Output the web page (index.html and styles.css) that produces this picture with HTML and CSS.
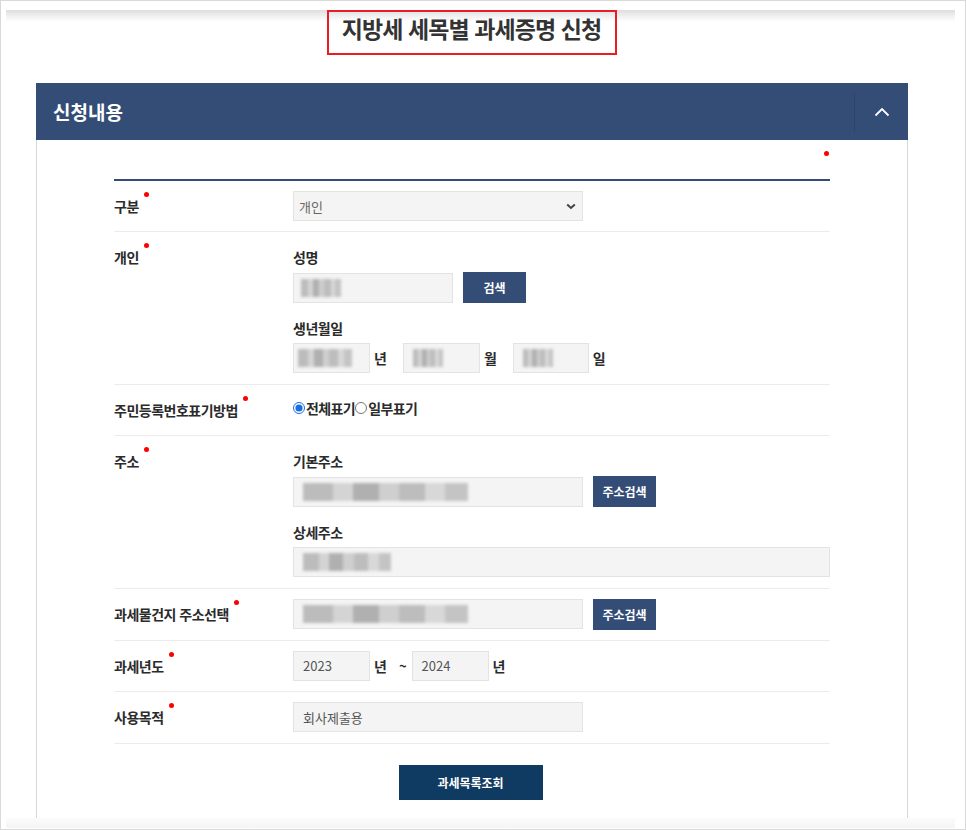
FILE: index.html
```html
<!DOCTYPE html>
<html lang="ko">
<head>
<meta charset="utf-8">
<title>지방세 세목별 과세증명 신청</title>
<link rel="stylesheet" href="styles.css">
</head>
<body>
<div class="page">
  <div class="top">
    <h1 class="title">지방세 세목별 과세증명 신청</h1>
  </div>

  <section class="panel">
    <header class="panel-head">
      <h2 class="panel-title">신청내용</h2>
      <button class="toggle" type="button" aria-label="접기">
        <svg width="16" height="10" viewBox="0 0 16 10"><path d="M1.5 8.5 L8 2 L14.5 8.5" fill="none" stroke="#fff" stroke-width="1.8"/></svg>
      </button>
    </header>

    <div class="panel-body">
      <div class="req-note"><span class="dot"></span></div>

      <div class="form">
        <div class="row">
          <div class="label req">구분</div>
          <div class="field">
            <div class="select w290">
              <span>개인</span>
              <svg width="10" height="7" viewBox="0 0 10 7"><path d="M1.2 1.5 L5 5 L8.8 1.5" fill="none" stroke="#444" stroke-width="2"/></svg>
            </div>
          </div>
        </div>

        <div class="row">
          <div class="label req">개인</div>
          <div class="field">
            <div class="sublabel">성명</div>
            <div class="line">
              <div class="input w160"><span class="blur b-name"></span></div>
              <button class="btn" type="button">검색</button>
            </div>
            <div class="sublabel gap">생년월일</div>
            <div class="line">
              <div class="input w77"><span class="blur b-year"></span></div>
              <span class="unit">년</span>
              <div class="input w77"><span class="blur b-md"></span></div>
              <span class="unit">월</span>
              <div class="input w76"><span class="blur b-md"></span></div>
              <span class="unit">일</span>
            </div>
          </div>
        </div>

        <div class="row">
          <div class="label req">주민등록번호표기방법</div>
          <div class="field">
            <div class="radios">
              <label class="radio"><input type="radio" name="rrn" checked>전체표기</label>
              <label class="radio"><input type="radio" name="rrn">일부표기</label>
            </div>
          </div>
        </div>

        <div class="row">
          <div class="label req">주소</div>
          <div class="field">
            <div class="sublabel">기본주소</div>
            <div class="line">
              <div class="input w290"><span class="blur b-addr"></span></div>
              <button class="btn" type="button">주소검색</button>
            </div>
            <div class="sublabel gap">상세주소</div>
            <div class="line">
              <div class="input full"><span class="blur b-detail"></span></div>
            </div>
          </div>
        </div>

        <div class="row">
          <div class="label req">과세물건지 주소선택</div>
          <div class="field">
            <div class="line">
              <div class="input w290"><span class="blur b-addr"></span></div>
              <button class="btn" type="button">주소검색</button>
            </div>
          </div>
        </div>

        <div class="row">
          <div class="label req">과세년도</div>
          <div class="field">
            <div class="line">
              <div class="input w77"><span class="val">2023</span></div>
              <span class="unit unit-y">년</span>
              <span class="tilde">~</span>
              <div class="input w77"><span class="val">2024</span></div>
              <span class="unit">년</span>
            </div>
          </div>
        </div>

        <div class="row">
          <div class="label req">사용목적</div>
          <div class="field">
            <div class="line">
              <div class="input w290"><span class="val">회사제출용</span></div>
            </div>
          </div>
        </div>
      </div>

      <div class="actions">
        <button class="btn-primary" type="button">과세목록조회</button>
      </div>
    </div>
  </section>
  <div class="bottom"></div>
</div>
</body>
</html>
```

FILE: styles.css
```css
* { box-sizing: border-box; }

html, body {
  margin: 0;
  padding: 0;
  background: #fff;
}

body {
  font-family: "Noto Sans CJK KR", "Noto Sans", sans-serif;
  color: #333;
}

.page {
  width: 966px;
  height: 830px;
  border: 1px solid #d9d9d9;
  overflow: hidden;
  background: #fff;
}

/* top band + title */
.top {
  margin: 9px 10px 0 5px;
  display: flex;
  justify-content: center;
  padding-right: 18px;
  background: linear-gradient(#dedede, #f0f0f0 6px, #fff 12px) no-repeat;
  background-size: 100% 12px;
}

.title {
  margin: 0;
  width: 290px;
  height: 45px;
  border: 2px solid #ea1c24;
  text-align: center;
  font-size: 23px;
  line-height: 32px;
  font-weight: 700;
  letter-spacing: -0.9px;
  color: #333;
}

/* panel */
.panel {
  margin: 28px 0 0 35px;
  width: 872px;
}

.panel-head {
  height: 57px;
  background: #344d77;
  display: flex;
  align-items: center;
  justify-content: space-between;
}

.panel-title {
  margin: 0;
  padding-left: 17px;
  font-size: 19px;
  font-weight: 700;
  color: #fff;
  letter-spacing: 0;
}

.toggle {
  width: 54px;
  height: 39px;
  margin-top: 1px;
  border: 0;
  border-left: 1px solid #2d4369;
  background: transparent;
  display: flex;
  align-items: center;
  justify-content: center;
  padding: 0;
}

.panel-body {
  border-left: 1px solid #d6d6d6;
  border-right: 1px solid #d6d6d6;
  padding: 0 77px;
  height: 678px;
  overflow: hidden;
}

.req-note {
  height: 39px;
  display: flex;
  justify-content: flex-end;
  padding-top: 11px;
  padding-right: 1px;
}

.dot {
  width: 5px;
  height: 5px;
  border-radius: 50%;
  background: #f00;
}

.form {
  border-top: 2px solid #344d77;
}

.row {
  display: flex;
  border-bottom: 1px solid #ececec;
  padding: 10px 0 10.4px;
}

.label {
  width: 179px;
  flex: none;
  font-size: 14px;
  font-weight: 700;
  letter-spacing: -0.5px;
  line-height: 30px;
  color: #2b2b2b;
}

.req::after {
  content: "";
  display: inline-block;
  width: 5px;
  height: 5px;
  border-radius: 50%;
  background: #f00;
  margin-left: 5px;
  vertical-align: top;
  margin-top: 1px;
}

.field {
  flex: 1;
  display: flex;
  flex-direction: column;
}

.sublabel {
  font-size: 14px;
  font-weight: 700;
  letter-spacing: -0.5px;
  line-height: 30px;
  color: #2b2b2b;
}

.sublabel.gap { margin-top: 10px; }

.line {
  display: flex;
  align-items: center;
}

.input, .select {
  height: 30px;
  background: #f4f4f4;
  border: 1px solid #e3e3e3;
  display: flex;
  align-items: center;
  padding-left: 9px;
  font-size: 13px;
  color: #555;
}

.select {
  justify-content: space-between;
  padding: 0 6px 0 5px;
  color: #666;
}

.w290 { width: 290px; }
.w160 { width: 160px; }
.w77 { width: 77px; }
.w76 { width: 76px; }
.full { width: 100%; }

.unit {
  font-size: 14px;
  font-weight: 700;
  color: #2b2b2b;
  margin: 0 16px 0 4px;
}

.line .unit:last-child { margin-right: 0; }

.unit-y { margin-right: 12px; }

.tilde {
  font-size: 13px;
  font-weight: 700;
  color: #2b2b2b;
  margin-right: 5px;
}

.val {
  color: #555;
  font-size: 13px;
}

.btn {
  height: 31px;
  margin-left: 10px;
  border: 0;
  background: #344d77;
  color: #fff;
  font-family: inherit;
  font-size: 12px;
  font-weight: 700;
  padding: 0 8px;
  min-width: 63px;
}

.radios {
  display: flex;
  align-items: center;
  line-height: 26px;
}

.radio {
  display: flex;
  align-items: center;
  font-size: 14px;
  font-weight: 700;
  letter-spacing: -0.6px;
  color: #2b2b2b;
}

.radio input {
  margin: 0 1px 0 0;
  width: 12px;
  height: 12px;
  accent-color: #1a6fe0;
}

/* blurred placeholders */
.blur {
  display: inline-block;
  height: 18px;
  filter: blur(1.4px);
  background:
    linear-gradient(90deg, #bcbcbc 0 18%, #d4d4d4 18% 30%, #b0b0b0 30% 46%, #cfcfcf 46% 58%, #bdbdbd 58% 74%, #d8d8d8 74% 86%, #c4c4c4 86% 100%);
}

.b-name { width: 40px; margin-left: -2px; }
.b-year { width: 54px; margin-left: -5px; }
.b-md { width: 30px; }
.b-addr { width: 165px; }
.b-detail { width: 88px; }

/* bottom action */
.actions {
  display: flex;
  justify-content: center;
  padding-top: 21px;
  padding-right: 3px;
}

.btn-primary {
  width: 144px;
  height: 35px;
  border: 0;
  background: #0f3a62;
  color: #fff;
  font-family: inherit;
  font-size: 12px;
  font-weight: 700;
}

.bottom {
  margin: 0 10px 0 5px;
  height: 10px;
  background: linear-gradient(#fbfbfb, #f5f5f5);
}
```
